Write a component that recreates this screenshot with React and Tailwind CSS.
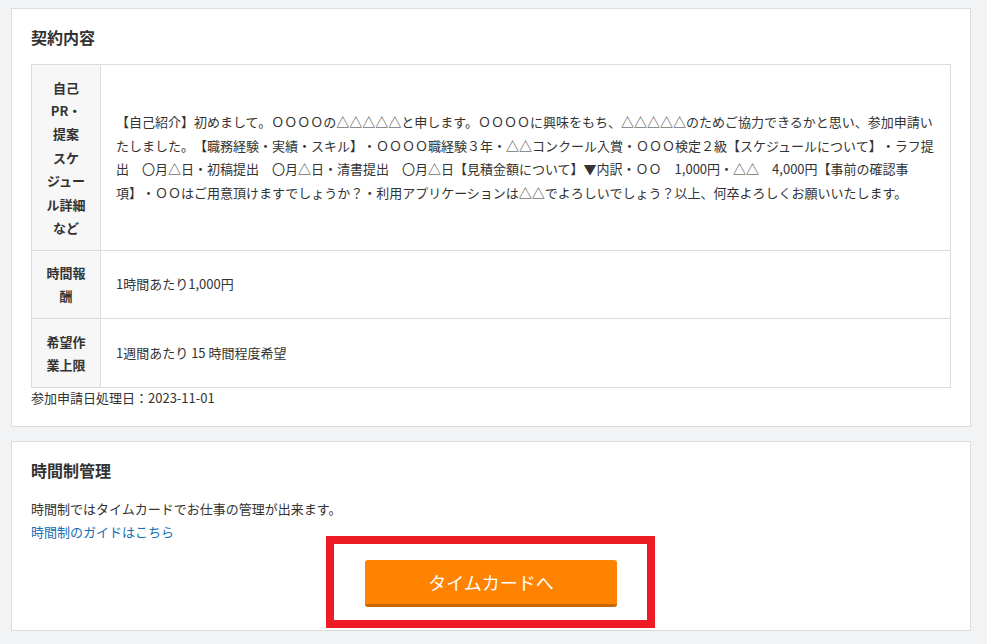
import React from "react";

const font = { fontFamily: '"Noto Sans CJK JP", "Noto Sans", sans-serif' };

const rows = [
  {
    label: ["自己", "PR・", "提案", "スケ", "ジュー", "ル詳細", "など"],
    body: [
      "【自己紹介】初めまして。ＯＯＯＯの△△△△△と申します。ＯＯＯＯに興味をもち、△△△△△のためご協力できるかと思い、参加申請い",
      "たしました。【職務経験・実績・スキル】・ＯＯＯＯ職経験３年・△△コンクール入賞・ＯＯＯ検定２級【スケジュールについて】・ラフ提",
      "出　〇月△日・初稿提出　〇月△日・清書提出　〇月△日【見積金額について】▼内訳・ＯＯ　1,000円・△△　4,000円【事前の確認事",
      "項】・ＯＯはご用意頂けますでしょうか？・利用アプリケーションは△△でよろしいでしょう？以上、何卒よろしくお願いいたします。",
    ],
    pad: "py-[10.5px]",
  },
  { label: ["時間報", "酬"], body: ["1時間あたり1,000円"], pad: "py-[10px]" },
  { label: ["希望作", "業上限"], body: ["1週間あたり 15 時間程度希望"], pad: "py-[11px]" },
];

export default function App() {
  return (
    <div className="min-h-screen bg-[#f2f3f5] pt-[8px] pb-4 text-[#333] [text-spacing-trim:space-all]" style={font}>
      {/* 契約内容 */}
      <section className="ml-[11px] w-[960px] bg-white border border-[#dcdcdc] px-[19px] pt-[16px] pb-[18px]">
        <h2 className="text-[16px] font-bold leading-6 mb-[15px]">契約内容</h2>

        <div className="border border-[#dcdcdc]">
          {rows.map((row, i) => (
            <div
              key={i}
              className={`grid grid-cols-[69px_1fr] ${i > 0 ? "border-t border-[#dcdcdc]" : ""}`}
            >
              <div
                className={`bg-[#f7f7f7] border-r border-[#dcdcdc] flex flex-col items-center justify-center text-[13px] font-bold leading-[23.4px] ${row.pad}`}
              >
                {row.label.map((l) => (
                  <span key={l}>{l}</span>
                ))}
              </div>
              <div className="flex flex-col justify-center pl-[15px] pr-[8px] text-[13px] leading-[23.7px] whitespace-nowrap">
                {row.body.map((b, j) => (
                  <span key={j}>{b}</span>
                ))}
              </div>
            </div>
          ))}
        </div>

        <p className="text-[13px] leading-5 mt-0">参加申請日処理日：2023-11-01</p>
      </section>

      {/* 時間制管理 */}
      <section className="ml-[11px] mt-[14px] w-[960px] bg-white border border-[#dcdcdc] px-[19px] pt-[16px] pb-[23px]">
        <h2 className="text-[16px] font-bold leading-6 mb-[15px]">時間制管理</h2>
        <p className="text-[13px] leading-[23px]">時間制ではタイムカードでお仕事の管理が出来ます。</p>
        <a href="#" className="block w-fit text-[13px] leading-[23px] text-[#1670b3]">
          時間制のガイドはこちら
        </a>

        <div className="flex justify-center mt-[17px]">
          <div className="relative">
            <button className="w-[252px] h-[47px] rounded-[3px] bg-[#ff8200] border-b-[3px] border-[#c96700] text-white text-[18px] leading-none">
              タイムカードへ
            </button>
            {/* annotation frame */}
            <div className="absolute left-[-39px] right-[-38px] top-[-24px] bottom-[-21px] border-[8px] border-[#ed1c24] pointer-events-none" />
          </div>
        </div>
      </section>
    </div>
  );
}
